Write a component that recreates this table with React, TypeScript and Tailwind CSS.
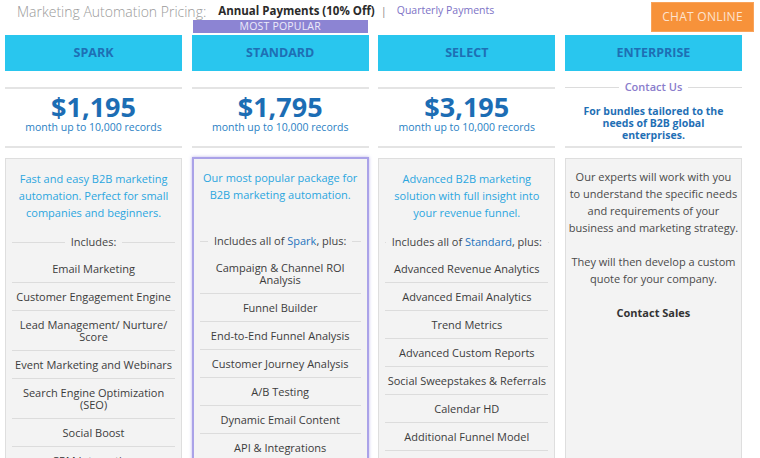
import React from "react";

type Plan = {
  name: string;
  price: string;
  desc: string[];
  includes: React.ReactNode;
  features: string[][];
  popular?: boolean;
};

const plans: Plan[] = [
  {
    name: "SPARK",
    price: "$1,195",
    desc: ["Fast and easy B2B marketing", "automation. Perfect for small", "companies and beginners."],
    includes: "Includes:",
    features: [
      ["Email Marketing"],
      ["Customer Engagement Engine"],
      ["Lead Management/ Nurture/", "Score"],
      ["Event Marketing and Webinars"],
      ["Search Engine Optimization", "(SEO)"],
      ["Social Boost"],
      ["CRM Integration"],
    ],
  },
  {
    name: "STANDARD",
    price: "$1,795",
    popular: true,
    desc: ["Our most popular package for", "B2B marketing automation."],
    includes: (
      <>
        Includes all of <span className="text-[#1f74bd]">Spark</span>, plus:
      </>
    ),
    features: [
      ["Campaign & Channel ROI", "Analysis"],
      ["Funnel Builder"],
      ["End-to-End Funnel Analysis"],
      ["Customer Journey Analysis"],
      ["A/B Testing"],
      ["Dynamic Email Content"],
      ["API & Integrations"],
      ["Predictive Content"],
    ],
  },
  {
    name: "SELECT",
    price: "$3,195",
    desc: ["Advanced B2B marketing", "solution with full insight into", "your revenue funnel."],
    includes: (
      <>
        Includes all of <span className="text-[#1f74bd]">Standard</span>, plus:
      </>
    ),
    features: [
      ["Advanced Revenue Analytics"],
      ["Advanced Email Analytics"],
      ["Trend Metrics"],
      ["Advanced Custom Reports"],
      ["Social Sweepstakes & Referrals"],
      ["Calendar HD"],
      ["Additional Funnel Model"],
      ["Attribution"],
    ],
  },
];

function Divider({ children }: { children: React.ReactNode }) {
  return (
    <div className="flex w-full items-center gap-[6px]">
      <div className="h-px flex-1 bg-[#dcdcdc]" />
      <div className="whitespace-nowrap">{children}</div>
      <div className="h-px flex-1 bg-[#dcdcdc]" />
    </div>
  );
}

function PlanColumn({ plan }: { plan: Plan }) {
  return (
    <div className="flex flex-col">
      <div className="h-[15px]">
        {plan.popular ? (
          <div className="mx-px h-[13px] bg-[#8c84d3] text-center text-[10.5px] leading-[13px] tracking-[0.2px] text-[#ecebfa]">
            MOST POPULAR
          </div>
        ) : null}
      </div>
      <div className="flex h-[36px] items-center justify-center bg-[#29c6ee] text-[12.5px] font-bold text-[#1e6fb4]">
        {plan.name}
      </div>
      <div className="mt-[16px] flex h-[61px] flex-col items-center border-y-2 border-[#e4e4e4] pt-[6px]">
        <div className="mb-[2px] text-[27px] font-bold leading-[24px] text-[#1c6db4]">{plan.price}</div>
        <div className="text-[10.5px] leading-[13px] text-[#2a7fc4]">month up to 10,000 records</div>
      </div>
      <div
        className={
          plan.popular
            ? "mt-[9px] h-[320px] border-2 border-[#aaa2e8] bg-[#f3f3f3] pt-[10px] shadow-[0_0_3px_rgba(140,130,220,0.6)]"
            : "mt-[10px] h-[320px] border border-[#dedede] bg-[#f3f3f3] pt-[11px]"
        }
      >
        <div className="h-[60px] text-center text-[11px] leading-[17px] text-[#2ba6df]">
          {plan.desc.map((l) => (
            <div key={l}>{l}</div>
          ))}
        </div>
        <div className="mx-[6px] flex h-[25px] items-center text-[11px] text-[#444]">
          <Divider>{plan.includes}</Divider>
        </div>
        {plan.features.map((f) => (
          <div
            key={f[0]}
            className="mx-[6px] whitespace-nowrap border-b border-[#dcdcdc] py-[7.5px] text-center text-[11px] leading-[12px] text-[#3c3c3c]"
          >
            {f.map((l) => (
              <div key={l}>{l}</div>
            ))}
          </div>
        ))}
      </div>
    </div>
  );
}

function EnterpriseColumn() {
  return (
    <div className="flex flex-col">
      <div className="h-[15px]" />
      <div className="flex h-[36px] items-center justify-center bg-[#29c6ee] text-[12.5px] font-bold text-[#1e6fb4]">
        ENTERPRISE
      </div>
      <div className="mt-[8px] flex h-[69px] flex-col border-b-2 border-[#e4e4e4]">
        <div className="text-[11px] font-semibold leading-[16px] text-[#8a7dcc]">
          <Divider>Contact Us</Divider>
        </div>
        <div className="mt-[10px] text-center text-[10.5px] font-bold leading-[12px] text-[#1f6fb5]">
          <div>For bundles tailored to the</div>
          <div>needs of B2B global</div>
          <div>enterprises.</div>
        </div>
      </div>
      <div className="mt-[10px] h-[320px] whitespace-nowrap border border-[#dedede] bg-[#f3f3f3] pt-[9px] text-center text-[11px] leading-[17px] text-[#4a4a4a]">
        <p>
          Our experts will work with you
          <br />
          to understand the specific needs
          <br />
          and requirements of your
          <br />
          business and marketing strategy.
        </p>
        <p className="mt-[17px]">
          They will then develop a custom
          <br />
          quote for your company.
        </p>
        <p className="mt-[17px] font-bold text-[#333]">Contact Sales</p>
      </div>
    </div>
  );
}

export default function App() {
  return (
    <div className="relative h-[458px] w-[760px] overflow-hidden bg-white font-['Open_Sans',sans-serif]">
      <div className="flex h-[20px] items-center pl-[17px] pt-[2px]">
        <span className="text-[14px] font-light text-[#9a9a9a]">Marketing Automation Pricing:</span>
        <span className="ml-[12px] text-[11.5px] font-bold text-[#2a2a2a]">Annual Payments (10% Off)</span>
        <span className="ml-[6px] text-[11px] text-[#888]">|</span>
        <span className="ml-[10px] text-[10.5px] text-[#7d72c6]">Quarterly Payments</span>
      </div>
      <button className="absolute right-[6px] top-[2px] h-[30px] w-[103px] border border-[#f9a35a] bg-[#f7923a] text-[12px] tracking-[0.3px] text-[#fde3cf]">
        CHAT ONLINE
      </button>
      <div className="ml-[5px] grid w-[737px] grid-cols-4 gap-[9.5px]">
        {plans.map((p) => (
          <PlanColumn key={p.name} plan={p} />
        ))}
        <EnterpriseColumn />
      </div>
    </div>
  );
}
